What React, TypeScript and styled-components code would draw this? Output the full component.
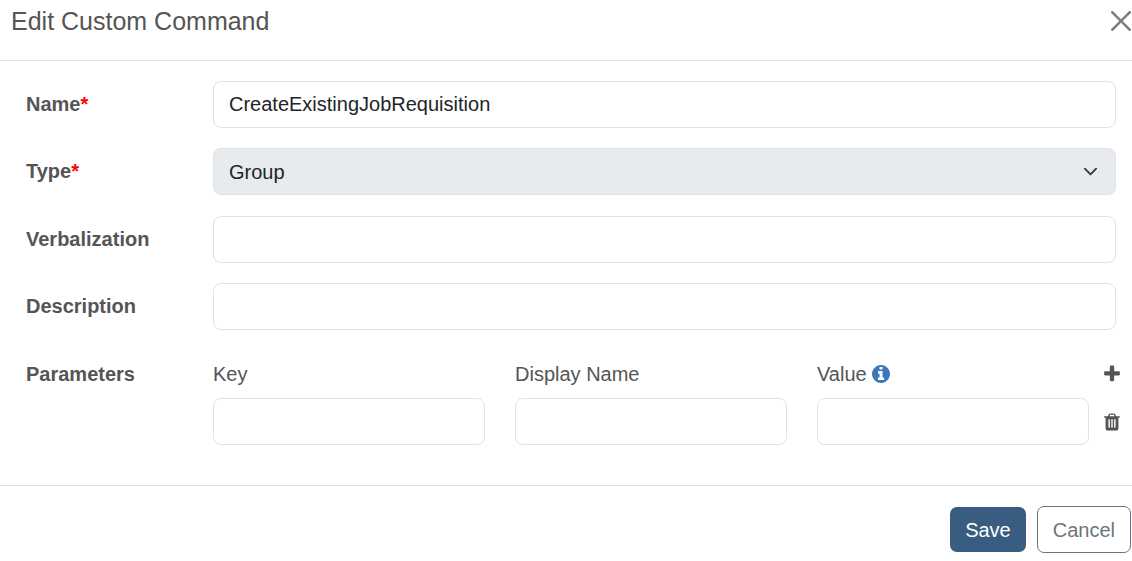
import React, { useState } from "react";
import styled, { createGlobalStyle } from "styled-components";

const GlobalStyle = createGlobalStyle`
  *, *::before, *::after { box-sizing: border-box; }
  body {
    margin: 0;
    background: #fff;
    color: #555;
    font-family: "Liberation Sans", Arial, sans-serif;
    font-size: 20px;
    line-height: 30px;
  }
  button, input, select { font: inherit; }
`;

const Dialog = styled.form`
  display: flex;
  flex-direction: column;
`;

const Header = styled.header`
  display: flex;
  align-items: center;
  justify-content: space-between;
  padding: 3px 0 21px 11px;
  border-bottom: 1px solid #dee2e6;
`;

const Title = styled.h1`
  margin: 0;
  font-size: 25px;
  line-height: 36px;
  font-weight: 400;
`;

const IconButton = styled.button`
  display: flex;
  align-items: center;
  justify-content: center;
  padding: 0;
  border: 0;
  background: none;
  color: inherit;
  cursor: pointer;
`;

const CloseButton = styled(IconButton)`
  padding-right: 1px;
  color: #7f7f7f;
`;

const Body = styled.div`
  display: flex;
  flex-direction: column;
  gap: 21px;
  padding: 20px 12px 40px 26px;
`;

const Section = styled.div`
  display: flex;
  flex-direction: column;
  gap: 20px;
  padding-right: 4px;
`;

const Row = styled.div`
  display: grid;
  grid-template-columns: 187px 1fr;
`;

const Label = styled.label`
  font-weight: 700;
  line-height: 47px;
`;

const Required = styled.span`
  color: #f00;
`;

const TextInput = styled.input`
  width: 100%;
  min-width: 0;
  height: 47px;
  padding: 0 15px;
  border: 1px solid #dee2e6;
  border-radius: 8px;
  background: #fff;
  color: #212529;
`;

const SelectWrap = styled.div`
  display: grid;
  align-items: center;

  > * { grid-area: 1 / 1; }
  > svg {
    justify-self: end;
    margin-right: 18px;
    pointer-events: none;
  }
`;

const Select = styled.select`
  appearance: none;
  width: 100%;
  height: 47px;
  padding: 0 45px 0 15px;
  border: 1px solid #dee2e6;
  border-radius: 8px;
  background: #e7ebee;
  color: #212529;
  opacity: 1;
`;

const ParameterGrid = styled.div`
  display: flex;
  gap: 15px;
`;

const Columns = styled.div`
  flex: 1;
  display: grid;
  grid-template-columns: repeat(3, 1fr);
  grid-template-rows: 45px 47px;
  gap: 2px 30px;
`;

const ColumnLabel = styled.label`
  display: flex;
  align-items: center;
  gap: 5px;
`;

const Actions = styled.div`
  display: grid;
  grid-template-columns: 16px;
  grid-template-rows: 45px 47px;
  row-gap: 2px;
`;

const Footer = styled.footer`
  display: flex;
  align-items: center;
  justify-content: flex-end;
  gap: 11px;
  padding: 20px 1px 8px;
  border-top: 1px solid #dee2e6;
`;

const Button = styled.button<{ $primary?: boolean }>`
  height: ${(p) => (p.$primary ? 45 : 47)}px;
  padding: 0 15px;
  border: ${(p) => (p.$primary ? "0" : "1px solid #6c757d")};
  border-radius: 7px;
  background: ${(p) => (p.$primary ? "#395d80" : "#fff")};
  color: ${(p) => (p.$primary ? "#fff" : "#6c757d")};
  cursor: pointer;
`;

const glyphs = {
  plus: "M1600 736v192q0 40-28 68t-68 28h-416v416q0 40-28 68t-68 28h-192q-40 0-68-28t-28-68v-416h-416q-40 0-68-28t-28-68v-192q0-40 28-68t68-28h416v-416q0-40 28-68t68-28h192q40 0 68 28t28 68v416h416q40 0 68 28t28 68z",
  trash:
    "M704 1376v-704q0-14-9-23t-23-9h-64q-14 0-23 9t-9 23v704q0 14 9 23t23 9h64q14 0 23-9t9-23zm256 0v-704q0-14-9-23t-23-9h-64q-14 0-23 9t-9 23v704q0 14 9 23t23 9h64q14 0 23-9t9-23zm256 0v-704q0-14-9-23t-23-9h-64q-14 0-23 9t-9 23v704q0 14 9 23t23 9h64q14 0 23-9t9-23zm-544-992h448l-48-117q-7-9-17-11h-317q-10 2-17 11zm928 32v64q0 14-9 23t-23 9h-96v948q0 83-47 143.5t-113 60.5h-832q-66 0-113-58.5t-47-141.5v-952h-96q-14 0-23-9t-9-23v-64q0-14 9-23t23-9h309l70-167q15-37 54-63t79-26h320q40 0 79 26t54 63l70 167h309q14 0 23 9t9 23z",
  info: "M1152 1376v-160q0-14-9-23t-23-9h-96v-512q0-14-9-23t-23-9h-320q-14 0-23 9t-9 23v160q0 14 9 23t23 9h96v320h-96q-14 0-23 9t-9 23v160q0 14 9 23t23 9h448q14 0 23-9t9-23zm-128-896v-160q0-14-9-23t-23-9h-192q-14 0-23 9t-9 23v160q0 14 9 23t23 9h192q14 0 23-9t9-23zm640 416q0 209-103 385.5t-279.5 279.5-385.5 103-385.5-103-279.5-279.5-103-385.5 103-385.5 279.5-279.5 385.5-103 385.5 103 279.5 279.5 103 385.5z",
};

const GlyphSvg = styled.svg`
  flex: none;
  fill: currentColor;
`;

const InfoSvg = styled(GlyphSvg)`
  color: #3b78bb;
`;

export default function App() {
  const [name, setName] = useState("CreateExistingJobRequisition");

  return (
    <>
      <GlobalStyle />
      <Dialog onSubmit={(e) => e.preventDefault()}>
        <Header>
          <Title>Edit Custom Command</Title>
          <CloseButton type="button" aria-label="Close">
            <svg width="20" height="20" viewBox="0 0 16 16" fill="currentColor">
              <path d="M.293.293a1 1 0 0 1 1.414 0L8 6.586 14.293.293a1 1 0 1 1 1.414 1.414L9.414 8l6.293 6.293a1 1 0 0 1-1.414 1.414L8 9.414l-6.293 6.293a1 1 0 0 1-1.414-1.414L6.586 8 .293 1.707a1 1 0 0 1 0-1.414" />
            </svg>
          </CloseButton>
        </Header>

        <Body>
          <Section>
            <Row>
              <Label htmlFor="name">
                Name<Required>*</Required>
              </Label>
              <TextInput id="name" value={name} onChange={(e) => setName(e.target.value)} />
            </Row>
            <Row>
              <Label htmlFor="type">
                Type<Required>*</Required>
              </Label>
              <SelectWrap>
                <Select id="type" disabled defaultValue="group">
                  <option value="group">Group</option>
                </Select>
                <svg width="15" height="15" viewBox="0 0 16 16" fill="none" stroke="#343a40" strokeWidth="2" strokeLinecap="round" strokeLinejoin="round">
                  <path d="m2 5 6 6 6-6" />
                </svg>
              </SelectWrap>
            </Row>
          </Section>

          <Section>
            <Row>
              <Label htmlFor="verbalization">Verbalization</Label>
              <TextInput id="verbalization" />
            </Row>
            <Row>
              <Label htmlFor="description">Description</Label>
              <TextInput id="description" />
            </Row>
          </Section>

          <Row>
            <Label as="div">Parameters</Label>
            <ParameterGrid>
              <Columns>
                <ColumnLabel htmlFor="key">Key</ColumnLabel>
                <ColumnLabel htmlFor="display-name">Display Name</ColumnLabel>
                <ColumnLabel htmlFor="value">
                  Value
                  <InfoSvg width="18" height="18" viewBox="128 128 1536 1536" aria-hidden="true">
                    <path d={glyphs.info} />
                  </InfoSvg>
                </ColumnLabel>
                <TextInput id="key" />
                <TextInput id="display-name" />
                <TextInput id="value" />
              </Columns>
              <Actions>
                <IconButton type="button" aria-label="Add parameter">
                  <GlyphSvg width="20" height="20" viewBox="0 0 1792 1792">
                    <path d={glyphs.plus} />
                  </GlyphSvg>
                </IconButton>
                <IconButton type="button" aria-label="Delete parameter">
                  <GlyphSvg width="20" height="20" viewBox="0 0 1792 1792">
                    <path d={glyphs.trash} />
                  </GlyphSvg>
                </IconButton>
              </Actions>
            </ParameterGrid>
          </Row>
        </Body>

        <Footer>
          <Button type="submit" $primary>
            Save
          </Button>
          <Button type="button">Cancel</Button>
        </Footer>
      </Dialog>
    </>
  );
}
